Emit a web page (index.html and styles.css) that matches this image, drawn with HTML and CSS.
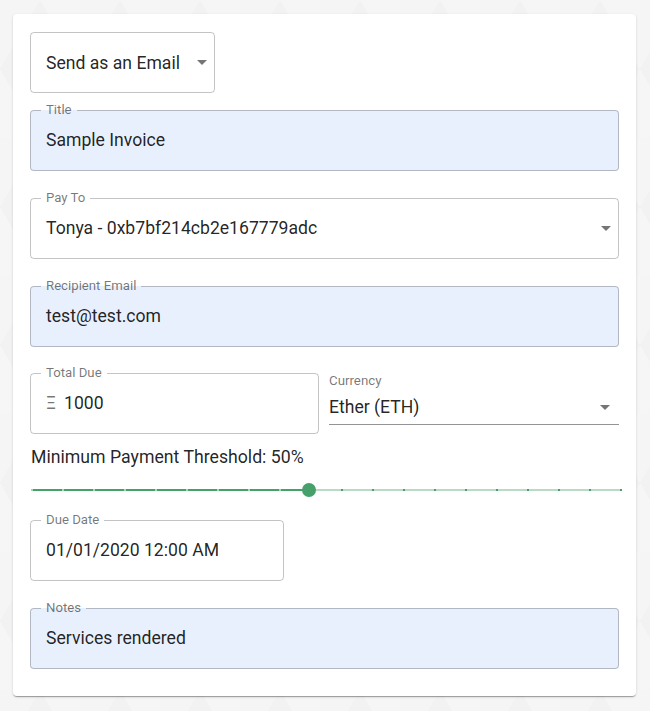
FILE: index.html
```html
<!DOCTYPE html>
<html lang="en">
<head>
<meta charset="utf-8">
<title>Invoice</title>
<link rel="stylesheet" href="styles.css">
</head>
<body>
<div class="card">
  <div class="select-box">
    <span class="value">Send as an Email</span>
    <span class="arrow"></span>
  </div>

  <fieldset class="field filled">
    <legend>Title</legend>
    <div class="value">Sample Invoice</div>
  </fieldset>

  <fieldset class="field">
    <legend>Pay To</legend>
    <div class="value with-arrow"><span>Tonya - 0xb7bf214cb2e167779adc</span><span class="arrow"></span></div>
  </fieldset>

  <fieldset class="field filled">
    <legend>Recipient Email</legend>
    <div class="value">test@test.com</div>
  </fieldset>

  <div class="row">
    <fieldset class="field">
      <legend>Total Due</legend>
      <div class="value"><span class="adorn">Ξ</span>1000</div>
    </fieldset>
    <div class="underline-select">
      <div class="small-label">Currency</div>
      <div class="value with-arrow"><span>Ether (ETH)</span><span class="arrow"></span></div>
    </div>
  </div>

  <div class="threshold">Minimum Payment Threshold: 50%</div>
  <div class="slider">
    <div class="rail"></div>
    <div class="track" style="width: 47%"></div>
    <div class="marks">
      <i class="on"></i><i class="on"></i><i class="on"></i><i class="on"></i><i class="on"></i>
      <i class="on"></i><i class="on"></i><i class="on"></i><i class="on"></i><i class="on"></i>
      <i></i><i></i><i></i><i></i><i></i><i></i><i></i><i></i><i></i><i></i>
    </div>
    <div class="thumb" style="left: 47%"></div>
  </div>

  <fieldset class="field date">
    <legend>Due Date</legend>
    <div class="value">01/01/2020 12:00 AM</div>
  </fieldset>

  <fieldset class="field filled">
    <legend>Notes</legend>
    <div class="value">Services rendered</div>
  </fieldset>
</div>
</body>
</html>
```

FILE: styles.css
```css
* { box-sizing: border-box; }

html, body {
  margin: 0;
  padding: 0;
}

body {
  width: 650px;
  height: 711px;
  overflow: hidden;
  font-family: Roboto, "Liberation Sans", sans-serif;
  color: rgba(0, 0, 0, 0.87);
  background-color: #f2f2f2;
  background-image:
    linear-gradient(60deg, rgba(255,255,255,0.28) 25%, transparent 25%, transparent 75%, rgba(255,255,255,0.28) 75%),
    linear-gradient(-60deg, rgba(255,255,255,0.2) 25%, transparent 25%, transparent 75%, rgba(255,255,255,0.2) 75%);
  background-size: 80px 138px;
  padding-top: 14px;
  padding-left: 13px;
}

.card {
  width: 623px;
  height: 682px;
  background: #fff;
  border-radius: 4px;
  box-shadow: 0 2px 1px -1px rgba(0,0,0,0.2), 0 1px 1px 0 rgba(0,0,0,0.14), 0 1px 3px 0 rgba(0,0,0,0.12);
  padding: 18px 17px 0 17px;
  display: flex;
  flex-direction: column;
  align-items: flex-start;
}

.value {
  font-size: 17.6px;
  line-height: 20px;
  white-space: nowrap;
}

.arrow {
  display: inline-block;
  flex: none;
  width: 0;
  height: 0;
  border-left: 5px solid transparent;
  border-right: 5px solid transparent;
  border-top: 5px solid rgba(0, 0, 0, 0.54);
}

.select-box {
  width: 185px;
  height: 61px;
  border: 1px solid rgba(0, 0, 0, 0.23);
  border-radius: 4px;
  display: flex;
  align-items: center;
  justify-content: space-between;
  padding: 0 7px 0 15px;
}

.field {
  margin: 0;
  width: 589px;
  border: 1px solid rgba(0, 0, 0, 0.23);
  border-radius: 4px;
  padding: 0 10px 20px 10px;
  min-inline-size: 0;
}

.select-box + .field { margin-top: 11px; }
.field + .field { margin-top: 21px; }
.field + .row { margin-top: 20px; }

.field.filled {
  background: #e8f0fe;
}

.field legend {
  font-size: 13.2px;
  line-height: 12px;
  padding: 0 5px;
  color: rgba(0, 0, 0, 0.54);
}

.field .value {
  padding: 14px 0 0 5px;
}

.with-arrow {
  display: flex;
  align-items: center;
  justify-content: space-between;
}

.field .with-arrow {
  margin-right: -3px;
}

.adorn {
  color: rgba(0, 0, 0, 0.54);
  margin-right: 8px;
}

.row {
  display: flex;
  gap: 10px;
  width: 589px;
  align-items: flex-start;
}

.row .field {
  width: 289px;
  flex: none;
}

.underline-select {
  flex: 1;
  padding-top: 6px;
  border-bottom: 1px solid rgba(0, 0, 0, 0.42);
  padding-bottom: 7px;
}

.small-label {
  font-size: 13.3px;
  line-height: 16px;
  color: rgba(0, 0, 0, 0.54);
}

.underline-select .value {
  margin-top: 8px;
  padding-right: 9px;
}

.threshold {
  margin-top: 13px;
  margin-left: 1px;
  font-size: 17.7px;
  line-height: 20px;
}

.slider {
  position: relative;
  width: 591px;
  height: 24px;
  margin-top: 11px;
  margin-left: 1px;
}

.rail, .track {
  position: absolute;
  left: 0;
  top: 11px;
  height: 2px;
}

.rail {
  width: 100%;
  background: #46a06a;
  opacity: 0.38;
}

.track {
  background: #46a06a;
}

.marks {
  position: absolute;
  left: 0;
  right: 0;
  top: 11px;
  height: 2px;
  display: flex;
  justify-content: space-between;
}

.marks i {
  display: block;
  width: 2px;
  height: 2px;
  background: #46a06a;
}

.marks i.on {
  background: rgba(255, 255, 255, 0.55);
}

.thumb {
  position: absolute;
  top: 5px;
  width: 14px;
  height: 14px;
  margin-left: -7px;
  border-radius: 50%;
  background: #46a06a;
}

.slider + .field { margin-top: 12px; }

.field.date {
  width: 254px;
}
```
